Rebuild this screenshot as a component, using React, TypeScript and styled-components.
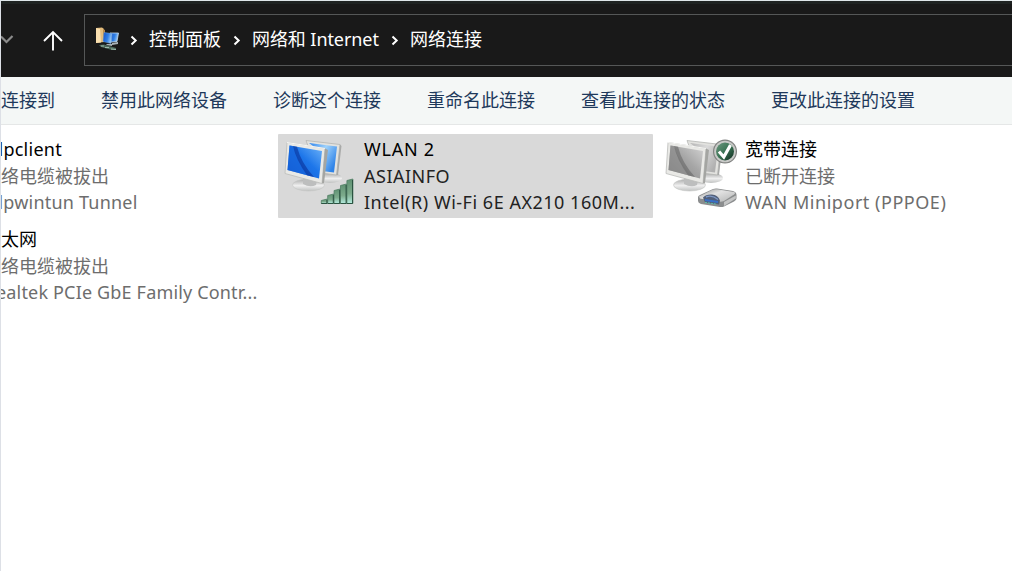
import React from 'react';
import styled, { createGlobalStyle } from 'styled-components';

const GlobalStyle = createGlobalStyle`
  *, *::before, *::after { box-sizing: border-box; }
  html, body { margin: 0; padding: 0; background: #fff; overflow: hidden; }
  body { font: 400 18px/26px "Noto Sans", "Noto Sans CJK SC", sans-serif; }
`;

const Window = styled.div`
  width: 1012px;
  height: 571px;
  overflow: hidden;
  display: flex;
  flex-direction: column;
  background: #fff;
  border-left: 1px solid #dde0e6;
  border-top: 1px solid #dfe6e9;
`;

const NavBar = styled.header`
  flex: none;
  height: 76px;
  display: flex;
  align-items: flex-start;
  background: #191919;
  border-top: 3px solid #1f2322;
`;

const NavButtons = styled.div`
  width: 83px;
  height: 72px;
  display: flex;
  align-items: center;
  svg { display: block; }
`;

const AddressBar = styled.div`
  flex: 1;
  height: 52px;
  margin-top: 10px;
  margin-right: -2px;
  padding-left: 9px;
  display: flex;
  align-items: center;
  border: 1px solid #555757;
  white-space: nowrap;
  color: #fff;
`;

const Crumb = styled.span<{ $w: number; $ls?: number }>`
  width: ${p => p.$w}px;
  letter-spacing: ${p => p.$ls ?? 0}px;
  padding-bottom: 2px;
`;

const Separator = styled.span<{ $w: number }>`
  width: ${p => p.$w}px;
  display: flex;
  justify-content: center;
`;

const Toolbar = styled.nav`
  flex: none;
  height: 48px;
  display: flex;
  align-items: center;
  gap: 46px;
  padding-bottom: 2px;
  background: #f4f7f6;
  border-bottom: 1px solid #e5e7e7;
  color: #1e395b;
  white-space: nowrap;
`;

const Content = styled.main`
  display: grid;
  grid-template-columns: 375px 375px 375px;
  grid-auto-rows: 84px;
  column-gap: 6px;
  row-gap: 6px;
  padding-top: 9px;
  margin-left: -104px;
`;

const Card = styled.article<{ $selected?: boolean; $row: number; $col: number }>`
  grid-row: ${p => p.$row};
  grid-column: ${p => p.$col};
  display: flex;
  border-radius: 1px;
  background: ${p => (p.$selected ? '#d9d9d9' : 'transparent')};
`;

const IconSlot = styled.div`
  flex: none;
  width: 86px;
  padding: 3px 0 0 5px;
  svg { display: block; }
`;

const Details = styled.div`
  padding-top: 2px;
  white-space: nowrap;
`;

const Line = styled.div<{ $color: string; $ls?: number; $indent?: number }>`
  height: 26px;
  line-height: 26px;
  letter-spacing: ${p => p.$ls ?? 0}px;
  margin-left: ${p => p.$indent ?? 0}px;
  color: ${p => p.$color};
  &:first-child { height: 27px; }
`;

const FolderNetworkIcon = () => (
  <svg width="25" height="26" viewBox="0 0 25 26">
    <defs>
      <linearGradient id="tinyBlue" x1="0" y1="0" x2="1" y2="0.3">
        <stop offset="0" stopColor="#1550c4" />
        <stop offset="0.6" stopColor="#2f7fe6" />
        <stop offset="1" stopColor="#9cc9f3" />
      </linearGradient>
    </defs>
    <path d="M2 1 L8 0.5 L10 2 L10 15 L2 16 Z" fill="#e3bc7c" />
    <path d="M2 1 L6 2 L7 15.5 L2 16 Z" fill="#f9dfaf" />
    <path d="M9 2 L11 3 L11 14 L9 14 Z" fill="#b78a4c" />
    <path d="M16 6 L24.5 6 L23 14.5 L17 15 Z" fill="url(#tinyBlue)" stroke="#c4dcef" strokeWidth="0.8" />
    <path d="M10 5.5 L18 6.5 L17 16.5 L9 14.5 Z" fill="url(#tinyBlue)" stroke="#6da1d8" strokeWidth="0.5" />
    <path d="M18 16 L24 15 L24 17 L18 18 Z M13 17 L18 17 L18 19 L12 18 Z" fill="#a9b3b8" />
    <path d="M5 18 L10 17.5 L22 21 L22 23 L18 23 L7 20 Z" fill="#4d6a5c" />
    <path d="M7 19 L10 19 M11 20.5 L15 20.5 M17 22 L22 22.5" stroke="#9db8ab" strokeWidth="1" />
  </svg>
);

const Monitors = ({ id, active }: { id: string; active?: boolean }) => (
  <>
    <defs>
      <linearGradient id={`${id}-screen`} x1="0" y1="1" x2="1" y2="0">
        <stop offset="0" stopColor={active ? '#1458cf' : '#858585'} />
        <stop offset="0.55" stopColor={active ? '#1d76ea' : '#a6a6a6'} />
        <stop offset="1" stopColor={active ? '#6fb4f8' : '#d4d4d4'} />
      </linearGradient>
      <linearGradient id={`${id}-back`} x1="0" y1="0" x2="1" y2="0.6">
        <stop offset="0" stopColor={active ? '#2b83ee' : '#b4b4b4'} />
        <stop offset="0.5" stopColor={active ? '#9fd2fb' : '#dadada'} />
        <stop offset="1" stopColor={active ? '#2f83e8' : '#b0b0b0'} />
      </linearGradient>
      <linearGradient id={`${id}-base`} x1="0" y1="0" x2="0" y2="1">
        <stop offset="0" stopColor="#a9aaaa" />
        <stop offset="0.55" stopColor="#efefef" />
        <stop offset="1" stopColor="#c0c2c1" />
      </linearGradient>
    </defs>
    <ellipse cx="47" cy="41" rx="12" ry="5" fill={`url(#${id}-base)`} />
    <path d="M23 3.5 L57 7.5 L53.5 38 L38 36 L25 9 Z" fill="#e2e2df" stroke="#b4b5b3" strokeWidth="0.8" />
    <path d="M26 6 L54 9.5 L51 35.5 L39 34 L30 9 Z" fill={`url(#${id}-back)`} />
    <path d="M57 7.5 L58.5 9 L55 38 L53.5 38 Z" fill="#a9aaa9" />
    <ellipse cx="25.5" cy="48" rx="16" ry="6" fill={`url(#${id}-base)`} stroke="#c3c4c3" strokeWidth="0.6" />
    <path d="M20 40 L34 43 L33 48 Q27 51 20 47 Z" fill="#bdbebe" />
    <path d="M4 5.5 L42 11.5 L39 46.5 L2 36.5 Z" fill="#e9e9e6" stroke="#bbbcba" strokeWidth="0.8" />
    <path d="M42 11.5 L45 13 L41 46 L39 46.5 Z" fill="#a4a5a2" />
    <path d="M6.5 8.5 L39 14 L36 41.5 L4.5 33 Z" fill={`url(#${id}-screen)`} />
    <path d="M10 9 Q15 25 28 39.3 L4.5 33 L6.5 8.5 Z" fill={active ? '#1462da' : '#888888'} opacity="0.6" />
    <path d="M10 9 L14 9.8 Q18 26 31 40 L24 38.2 Q13 23 10 9 Z" fill={active ? '#0b3aa4' : '#6f6f6f'} opacity="0.7" />
    <path d="M4 5.5 L42 11.5" stroke="#f6f6f4" strokeWidth="1.2" />
  </>
);

const bars = [
  { x: 38.3, h: 5 },
  { x: 44.7, h: 10 },
  { x: 51.1, h: 15 },
  { x: 57.5, h: 20 },
  { x: 63.9, h: 25 },
];

const WifiConnectionIcon = () => (
  <svg width="76" height="74" viewBox="0 0 76 74">
    <defs>
      <linearGradient id="signal" x1="0" y1="0" x2="0" y2="1">
        <stop offset="0" stopColor="#5f9172" />
        <stop offset="0.6" stopColor="#7dab8c" />
        <stop offset="1" stopColor="#b4ecdf" />
      </linearGradient>
    </defs>
    <Monitors id="wifi" active />
    {bars.map(b => (
      <path
        key={b.x}
        d={`M${b.x} ${67 - b.h + 1.5} l6 -1.5 V66.5 h-6 Z`}
        fill="url(#signal)"
        stroke="#4f7d63"
        strokeWidth="0.8"
      />
    ))}
    {bars.map(b => (
      <path key={b.x} d={`M${b.x + 5.6} ${67 - b.h + 1} V66.5 H${b.x}`} fill="none" stroke="#2b5341" strokeWidth="1" />
    ))}
  </svg>
);

const BroadbandIcon = () => (
  <svg width="76" height="74" viewBox="0 0 76 74">
    <defs>
      <linearGradient id="badgeGreen" x1="0" y1="0" x2="1" y2="1">
        <stop offset="0" stopColor="#709982" />
        <stop offset="0.5" stopColor="#397353" />
        <stop offset="1" stopColor="#102a1e" />
      </linearGradient>
      <linearGradient id="modemTop" x1="0" y1="0" x2="1" y2="1">
        <stop offset="0" stopColor="#8f9191" />
        <stop offset="0.4" stopColor="#e2e2e2" />
        <stop offset="1" stopColor="#b3b4b4" />
      </linearGradient>
    </defs>
    <Monitors id="wan" />
    <circle cx="61" cy="14.5" r="12" fill="#818281" />
    <circle cx="61" cy="14.5" r="10.8" fill="#c9cac8" />
    <circle cx="61" cy="14.5" r="9" fill="url(#badgeGreen)" />
    <path d="M55 14.5 L59.8 20 L66.5 8" fill="none" stroke="#fff" strokeWidth="3.2" />
    <path d="M34 60 Q34 58.5 37 57.5 L49 52 Q51 51.3 53 51.6 L69 54 Q72.5 55 72.5 58 V61.5 Q72.5 63 70 64.5 L60 69.5 Q58.5 70.3 56 70 L37 67 Q34 66 34 64 Z" fill="#8b8d8e" />
    <path d="M35 59.5 L49 52.6 Q51 52 53 52.3 L70 55 Q72 56 70 57.5 L60 64 Q58 65 55 64.7 L36 61.5 Z" fill="url(#modemTop)" />
    <path d="M60 65 L71.8 58.5 V61.5 L60 69 Z" fill="#c4c5c5" />
    <path d="M39 60.5 Q42 57 48 57.5 Q54 58 56 63.5 L55 67.5 L41 65.5 Z" fill="#52607a" />
    <path d="M42 60 Q48 57.5 54 62.5" fill="none" stroke="#7f99c6" strokeWidth="1.4" />
    <path d="M41 63 L54 65" stroke="#3870c9" strokeWidth="1.8" />
    <path d="M41 65.4 L53 67.2" stroke="#5cc0aa" strokeWidth="1" strokeDasharray="2 1" />
  </svg>
);

const Chevron = () => (
  <svg width="8" height="12" viewBox="0 0 8 12">
    <path d="M1.5 2.5 L5.7 6.5 L1.5 10.5" fill="none" stroke="#fff" strokeWidth="2" />
  </svg>
);

const actions = [
  '连接到',
  '禁用此网络设备',
  '诊断这个连接',
  '重命名此连接',
  '查看此连接的状态',
  '更改此连接的设置',
];

export default function App() {
  return (
    <>
      <GlobalStyle />
      <Window>
        <NavBar>
          <NavButtons>
            <svg width="83" height="72" viewBox="1 4 83 72">
              <path d="M1 36.5 L6.5 42 L12.5 36" fill="none" stroke="#8b8b8b" strokeWidth="2.2" />
              <path d="M53 50.5 V32 M44 41 L53 32 L62 41" fill="none" stroke="#fff" strokeWidth="1.9" />
            </svg>
          </NavButtons>
          <AddressBar>
            <FolderNetworkIcon />
            <Separator $w={30}><Chevron /></Separator>
            <Crumb $w={72}>控制面板</Crumb>
            <Separator $w={31}><Chevron /></Separator>
            <Crumb $w={127} $ls={-0.08}>网络和 Internet</Crumb>
            <Separator $w={31}><Chevron /></Separator>
            <Crumb $w={74}>网络连接</Crumb>
          </AddressBar>
        </NavBar>
        <Toolbar>
          {actions.map(a => (
            <span key={a}>{a}</span>
          ))}
        </Toolbar>
        <Content>
          <Card $row={1} $col={1}>
            <Details>
              <Line $color="#000" $ls={0.25} $indent={101.5}>lpclient</Line>
              <Line $color="#6d6d6d" $indent={104}>络电缆被拔出</Line>
              <Line $color="#6d6d6d" $ls={0.2} $indent={101.5}>lpwintun Tunnel</Line>
            </Details>
          </Card>
          <Card $row={2} $col={1}>
            <Details>
              <Line $color="#000" $indent={104}>太网</Line>
              <Line $color="#6d6d6d" $indent={104}>络电缆被拔出</Line>
              <Line $color="#6d6d6d" $ls={0.17} $indent={99}>ealtek PCIe GbE Family Contr...</Line>
            </Details>
          </Card>
          <Card $row={1} $col={2} $selected>
            <IconSlot><WifiConnectionIcon /></IconSlot>
            <Details>
              <Line $color="#000" $ls={0.75}>WLAN 2</Line>
              <Line $color="#222" $ls={0.5}>ASIAINFO</Line>
              <Line $color="#222" $ls={0.52}>Intel(R) Wi-Fi 6E AX210 160M...</Line>
            </Details>
          </Card>
          <Card $row={1} $col={3}>
            <IconSlot><BroadbandIcon /></IconSlot>
            <Details>
              <Line $color="#000">宽带连接</Line>
              <Line $color="#6d6d6d">已断开连接</Line>
              <Line $color="#6d6d6d" $ls={0.53}>WAN Miniport (PPPOE)</Line>
            </Details>
          </Card>
        </Content>
      </Window>
    </>
  );
}
